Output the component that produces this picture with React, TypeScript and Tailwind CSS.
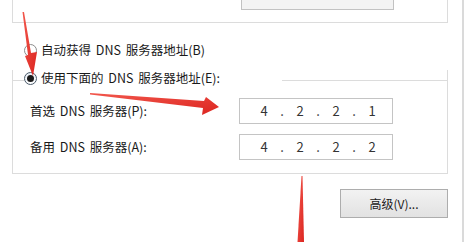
const FONT = { fontFamily: '"Noto Sans CJK SC", "Noto Sans", sans-serif' }

const Radio = ({ checked }: { checked?: boolean }) => (
  <span
    className={
      checked
        ? 'flex h-[13px] w-[13px] shrink-0 items-center justify-center rounded-full border border-[#4a5a6a] bg-gradient-to-b from-[#e8eef5] to-white'
        : 'flex h-[13px] w-[13px] shrink-0 items-center justify-center rounded-full border border-[#8c8c8c] bg-white'
    }
  >
    {checked ? <span className="h-[7px] w-[7px] rounded-full bg-[#1a1a1a]" /> : null}
  </span>
)

const IpField = ({ parts }: { parts: string[] }) => (
  <div className="flex h-[26px] w-[154px] items-center border border-[#c4c4c4] bg-white pl-[15px] text-[13px] text-[#333]">
    {parts.map((p, i) => (
      <div key={i} className="flex items-center">
        {i > 0 ? <span className="w-[18px] text-center">.</span> : null}
        <span className="w-[18px] text-center">{p}</span>
      </div>
    ))}
  </div>
)

const Arrows = () => (
  <svg className="pointer-events-none absolute inset-0" width="469" height="242" viewBox="0 0 469 242">
    <defs>
      <linearGradient id="red" x1="0" y1="0" x2="1" y2="1">
        <stop offset="0" stopColor="#f2574c" />
        <stop offset="1" stopColor="#dc2520" />
      </linearGradient>
    </defs>
    <polygon points="22.5,12 24,12 31,53 37,52 33,76 25,56 28,55" fill="url(#red)" />
    <polygon points="90,93 90,94.5 203,108 202,115 219,107 206,97 204,101" fill="url(#red)" />
    <polygon points="301.5,176 302.5,176 304,242 297.5,242" fill="url(#red)" />
  </svg>
)

export default function App() {
  return (
    <div
      className="relative h-[242px] w-[469px] overflow-hidden bg-white text-[12.5px] text-[#1a1a1a] [word-spacing:2px]"
      style={FONT}
    >
      <div className="h-full w-[464px] border-r-2 border-[#dadada] pl-[12px]">
        <div className="flex h-[23px] w-[436px] justify-end border-x border-b border-[#dcdcdc] pr-[53px]">
          <div className="h-[10px] w-[153px] border-x border-b border-[#c2c2c2] bg-[#f3f3f3]" />
        </div>

        <div className="mt-[19px] flex h-[16px] items-center gap-[4px] pl-[12px]">
          <Radio />
          <span>自动获得 DNS 服务器地址(B)</span>
        </div>

        <div className="mt-[22px] w-[436px] border-x border-b border-[#dcdcdc] pb-[13px]">
          <div className="-mt-[10px] flex h-[16px] items-center">
            <span className="mt-[10px] h-px w-[11px] self-start bg-[#dcdcdc]" />
            <div className="flex items-center gap-[4px]">
              <Radio checked />
              <span>使用下面的 DNS 服务器地址(E):</span>
            </div>
            <span className="ml-auto mt-[10px] h-px w-[165px] self-start bg-[#dcdcdc]" />
          </div>

          <div className="mt-[12px] flex items-center pl-[17px]">
            <span className="w-[209px]">首选 DNS 服务器(P):</span>
            <IpField parts={['4', '2', '2', '1']} />
          </div>
          <div className="mt-[10px] flex items-center pl-[17px]">
            <span className="w-[209px]">备用 DNS 服务器(A):</span>
            <IpField parts={['4', '2', '2', '2']} />
          </div>
        </div>

        <div className="mt-[15px] flex w-[436px] justify-end">
          <button className="flex h-[29px] w-[108px] items-center justify-center border border-[#adadad] bg-gradient-to-b from-[#f2f2f2] to-[#e2e2e2] text-[12px] text-[#1a1a1a] [word-spacing:0px]">
            高级(V)...
          </button>
        </div>
      </div>
      <Arrows />
    </div>
  )
}
